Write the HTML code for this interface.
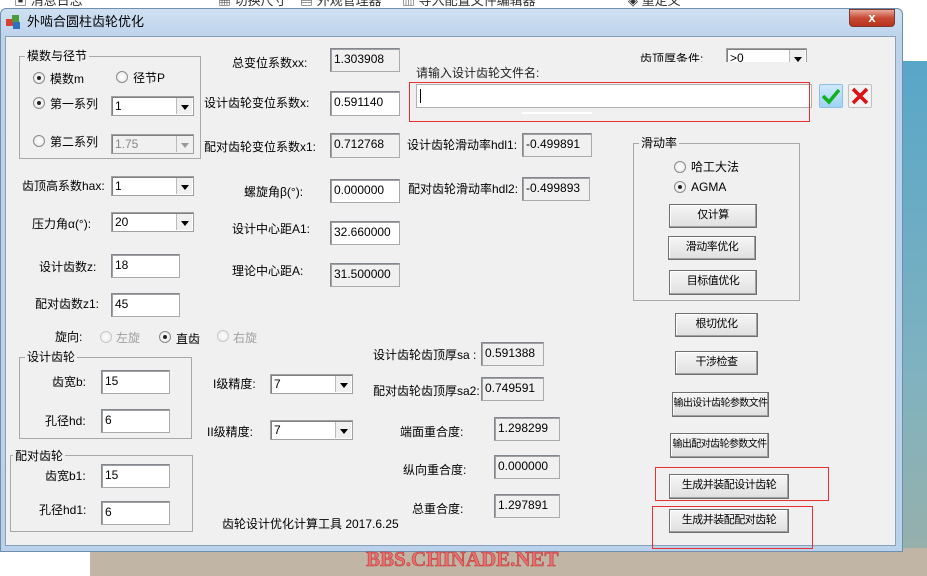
<!DOCTYPE html>
<html><head><meta charset="utf-8">
<style>
*{box-sizing:border-box;margin:0;padding:0}
body{width:927px;height:576px;overflow:hidden;position:relative;background:#fff;font-family:"Liberation Sans","Noto Sans CJK SC","WenQuanYi Zen Hei",sans-serif;font-size:12px;color:#000}
.a{position:absolute;white-space:nowrap;line-height:14px}
.tb{position:absolute;background:#fff;border:1px solid #aaa;border-top-color:#828790;border-left-color:#828790;box-shadow:inset 1px 1px 0 #a0a0a0;padding:2px 0 0 3px;font-size:12px;line-height:16px;color:#000;white-space:nowrap}
.ro{background:#f0f0f0}
.cb{position:absolute;background:#fff;border:1px solid #a0a0a0;box-shadow:inset 1px 1px 0 #808080;padding:2px 0 0 3px;line-height:14px}
.cb .ar{position:absolute;right:1px;top:1px;bottom:1px;width:16px;background:#f0f0f0;border-left:1px solid #bbb}
.cb .ar:after{content:"";position:absolute;left:4px;top:7px;border:4px solid transparent;border-top:5px solid #000;border-bottom:0}
.dis{background:#f0f0f0;color:#888}
.dis .ar:after{border-top-color:#999}
.btn{position:absolute;background:linear-gradient(#f6f6f6,#e0e0e0);border:1px solid #707070;box-shadow:inset -1px -1px 0 #a0a0a0,inset 1px 1px 0 #fff;text-align:center;line-height:21px;white-space:nowrap;font-size:11px;letter-spacing:-0.5px}
.gb{position:absolute;border:1px solid #a8a8a8}
.gl{position:absolute;background:#f0f0f0;padding:0 2px;line-height:14px}
.rd{position:absolute;width:12px;height:12px;border-radius:50%;border:1px solid #8a8a8a;background:radial-gradient(#fff,#e6e6e6)}
.rd.on:after{content:"";position:absolute;left:3px;top:3px;width:4px;height:4px;border-radius:50%;background:#222}
.rd.dd{border-color:#c8c8c8}
.red{position:absolute;border:1px solid #e83030}
</style></head><body>
<div style="position:absolute;left:903px;top:61px;width:24px;height:515px;background:linear-gradient(#58a6c8,#7fb2c0 60%,#9ab0a8)"></div>
<div style="position:absolute;left:90px;top:548px;width:837px;height:28px;background:#c1b6a6"></div>
<div style="position:absolute;left:0;top:548px;width:90px;height:28px;background:#fff"></div>
<div class="a" style="left:14px;top:-6px;color:#333;font-size:13px">▣ 消息日志</div>
<div class="a" style="left:218px;top:-6px;color:#333;font-size:13px">▦ 切换尺寸</div>
<div class="a" style="left:300px;top:-6px;color:#333;font-size:13px">▤ 外观管理器</div>
<div class="a" style="left:402px;top:-6px;color:#333;font-size:13px">▥ 导入配置文件编辑器</div>
<div class="a" style="left:628px;top:-6px;color:#333;font-size:13px">◈ 重定义</div>
<div style="position:absolute;left:0;top:8px;width:903px;height:544px;border:1px solid #6f8fae;border-radius:6px 6px 0 0;background:linear-gradient(#cfe0f2,#bcd3eb 30px,#b9d1ea)"></div>
<div class="a" style="left:6px;top:15px;width:16px;height:14px"><div style="position:absolute;left:0;top:4px;width:7px;height:7px;background:#d84030"></div><div style="position:absolute;left:6px;top:0;width:7px;height:7px;background:#4a9a40"></div><div style="position:absolute;left:7px;top:7px;width:7px;height:7px;background:#3070c0"></div></div>
<div class="a" style="left:27px;top:15px;font-size:13px;color:#000">外啮合圆柱齿轮优化</div>
<div style="position:absolute;left:849px;top:9px;width:46px;height:18px;border:1px solid #7a3a30;border-radius:0 0 4px 4px;background:linear-gradient(#e9a99c,#c74a34 50%,#b8321e);color:#fff;text-align:center;font-weight:bold;font-size:13px;line-height:16px">x</div>
<div style="position:absolute;left:5px;top:36px;width:891px;height:510px;background:#f0f0f0;border:1px solid #8aa0b8"></div>

<div class="gb" style="left:19px;top:56px;width:182px;height:103px"></div>
<div class="gl" style="left:25px;top:49px">模数与径节</div>
<div class="rd on" style="left:33px;top:72px"></div><div class="a" style="left:50px;top:72px">模数m</div>
<div class="rd" style="left:116px;top:71px"></div><div class="a" style="left:133px;top:71px">径节P</div>
<div class="rd on" style="left:33px;top:97px"></div><div class="a" style="left:50px;top:97px">第一系列</div>
<div class="cb" style="left:111px;top:96px;width:83px;height:20px">1<div class="ar"></div></div>
<div class="rd" style="left:33px;top:135px"></div><div class="a" style="left:50px;top:135px">第二系列</div>
<div class="cb dis" style="left:111px;top:134px;width:83px;height:20px">1.75<div class="ar"></div></div>

<div class="a" style="left:22px;top:179px">齿顶高系数hax:</div>
<div class="cb" style="left:111px;top:176px;width:83px;height:20px">1<div class="ar"></div></div>
<div class="a" style="left:32px;top:217px">压力角α(°):</div>
<div class="cb" style="left:111px;top:212px;width:83px;height:20px">20<div class="ar"></div></div>
<div class="a" style="left:39px;top:260px">设计齿数z:</div>
<div class="tb" style="left:111px;top:254px;width:69px;height:24px">18</div>
<div class="a" style="left:35px;top:297px">配对齿数z1:</div>
<div class="tb" style="left:111px;top:293px;width:69px;height:24px">45</div>

<div class="a" style="left:55px;top:330px">旋向:</div>
<div class="rd dd" style="left:100px;top:331px"></div><div class="a" style="left:116px;top:331px;color:#a0a0a0">左旋</div>
<div class="rd on" style="left:159px;top:331px"></div><div class="a" style="left:176px;top:332px">直齿</div>
<div class="rd dd" style="left:217px;top:330px"></div><div class="a" style="left:233px;top:331px;color:#a0a0a0">右旋</div>

<div class="gb" style="left:19px;top:357px;width:173px;height:82px"></div>
<div class="gl" style="left:25px;top:350px">设计齿轮</div>
<div class="a" style="left:52px;top:375px">齿宽b:</div>
<div class="tb" style="left:101px;top:370px;width:69px;height:24px">15</div>
<div class="a" style="left:45px;top:414px">孔径hd:</div>
<div class="tb" style="left:101px;top:409px;width:69px;height:24px">6</div>

<div class="gb" style="left:10px;top:455px;width:183px;height:77px"></div>
<div class="gl" style="left:13px;top:449px">配对齿轮</div>
<div class="a" style="left:45px;top:469px">齿宽b1:</div>
<div class="tb" style="left:101px;top:464px;width:69px;height:24px">15</div>
<div class="a" style="left:39px;top:503px">孔径hd1:</div>
<div class="tb" style="left:101px;top:501px;width:69px;height:24px">6</div>

<div class="a" style="left:232px;top:56px">总变位系数xx:</div>
<div class="tb ro" style="left:330px;top:48px;width:70px;height:24px">1.303908</div>
<div class="a" style="left:204px;top:96px">设计齿轮变位系数x:</div>
<div class="tb" style="left:330px;top:91px;width:70px;height:25px">0.591140</div>
<div class="a" style="left:204px;top:140px">配对齿轮变位系数x1:</div>
<div class="tb ro" style="left:330px;top:133px;width:70px;height:25px">0.712768</div>
<div class="a" style="left:244px;top:185px">螺旋角β(°):</div>
<div class="tb" style="left:330px;top:179px;width:70px;height:24px">0.000000</div>
<div class="a" style="left:232px;top:222px">设计中心距A1:</div>
<div class="tb" style="left:330px;top:221px;width:70px;height:24px">32.660000</div>
<div class="a" style="left:232px;top:264px">理论中心距A:</div>
<div class="tb ro" style="left:330px;top:263px;width:70px;height:24px">31.500000</div>

<div class="a" style="left:213px;top:377px">I级精度:</div>
<div class="cb" style="left:270px;top:374px;width:83px;height:20px">7<div class="ar"></div></div>
<div class="a" style="left:207px;top:425px">II级精度:</div>
<div class="cb" style="left:270px;top:420px;width:83px;height:20px">7<div class="ar"></div></div>

<div class="a" style="left:373px;top:348px">设计齿轮齿顶厚sa :</div>
<div class="tb ro" style="left:481px;top:342px;width:63px;height:24px">0.591388</div>
<div class="a" style="left:373px;top:384px">配对齿轮齿顶厚sa2:</div>
<div class="tb ro" style="left:481px;top:377px;width:63px;height:24px">0.749591</div>
<div class="a" style="left:400px;top:425px">端面重合度:</div>
<div class="tb ro" style="left:494px;top:417px;width:66px;height:24px">1.298299</div>
<div class="a" style="left:403px;top:463px">纵向重合度:</div>
<div class="tb ro" style="left:494px;top:455px;width:66px;height:24px">0.000000</div>
<div class="a" style="left:412px;top:502px">总重合度:</div>
<div class="tb ro" style="left:494px;top:494px;width:66px;height:24px">1.297891</div>
<div class="a" style="left:222px;top:517px">齿轮设计优化计算工具 2017.6.25</div>

<div class="a" style="left:407px;top:138px">设计齿轮滑动率hdl1:</div>
<div class="tb ro" style="left:522px;top:133px;width:70px;height:24px">-0.499891</div>
<div class="a" style="left:408px;top:182px">配对齿轮滑动率hdl2:</div>
<div class="tb ro" style="left:522px;top:177px;width:68px;height:24px">-0.499893</div>

<div class="a" style="left:640px;top:52px">齿顶厚条件:</div>
<div class="cb" style="left:726px;top:48px;width:81px;height:20px">&gt;0<div class="ar"></div></div>
<div style="position:absolute;left:405px;top:62px;width:485px;height:50px;background:#f0f0f0"></div>
<div style="position:absolute;left:522px;top:112px;width:70px;height:2px;background:#fff"></div>
<div class="a" style="left:416px;top:66px;color:#222">请输入设计齿轮文件名:</div>
<div style="position:absolute;left:416px;top:84px;width:396px;height:24px;background:#fff;border:1px solid #b0b0b0"></div>
<div style="position:absolute;left:420px;top:89px;width:1px;height:14px;background:#000"></div>
<div class="red" style="left:409px;top:82px;width:401px;height:40px"></div>
<div style="position:absolute;left:819px;top:84px;width:24px;height:24px;border:1px solid #8cc0e0;border-radius:2px;background:linear-gradient(#cfe9fb,#9fd3f4)"><svg width="22" height="22" viewBox="0 0 22 22"><path d="M3 11 L9 17 L19 5" stroke="#10b020" stroke-width="3.5" fill="none"/></svg></div>
<div style="position:absolute;left:848px;top:84px;width:24px;height:24px;border:1px solid #c0c0c0;border-radius:2px;background:#f3f3f3"><svg width="22" height="22" viewBox="0 0 22 22"><path d="M4 4 L18 18 M18 4 L4 18" stroke="#e01010" stroke-width="3.5"/></svg></div>

<div class="gb" style="left:633px;top:143px;width:167px;height:158px"></div>
<div class="gl" style="left:639px;top:136px">滑动率</div>
<div class="rd" style="left:674px;top:161px"></div><div class="a" style="left:691px;top:160px">哈工大法</div>
<div class="rd on" style="left:674px;top:181px"></div><div class="a" style="left:691px;top:180px">AGMA</div>
<div class="btn" style="left:669px;top:204px;width:88px;height:24px">仅计算</div>
<div class="btn" style="left:668px;top:236px;width:88px;height:24px">滑动率优化</div>
<div class="btn" style="left:669px;top:270px;width:88px;height:25px">目标值优化</div>
<div class="btn" style="left:675px;top:313px;width:83px;height:24px">根切优化</div>
<div class="btn" style="left:675px;top:351px;width:83px;height:24px">干涉检查</div>
<div class="btn" style="left:672px;top:392px;width:97px;height:25px;font-size:10px;letter-spacing:-0.6px">输出设计齿轮参数文件</div>
<div class="btn" style="left:670px;top:433px;width:99px;height:25px;font-size:10px;letter-spacing:-0.6px">输出配对齿轮参数文件</div>
<div class="btn" style="left:669px;top:474px;width:120px;height:25px">生成并装配设计齿轮</div>
<div class="btn" style="left:669px;top:509px;width:120px;height:24px">生成并装配配对齿轮</div>
<div class="red" style="left:655px;top:467px;width:174px;height:34px"></div>
<div class="red" style="left:652px;top:506px;width:161px;height:43px"></div>

<div class="a" style="left:366px;top:547px;font-family:'Liberation Serif',serif;font-weight:bold;font-size:21px;line-height:24px;color:#e87070;-webkit-text-stroke:0.6px #c03838">BBS.CHINADE.NET</div>
</body></html>
